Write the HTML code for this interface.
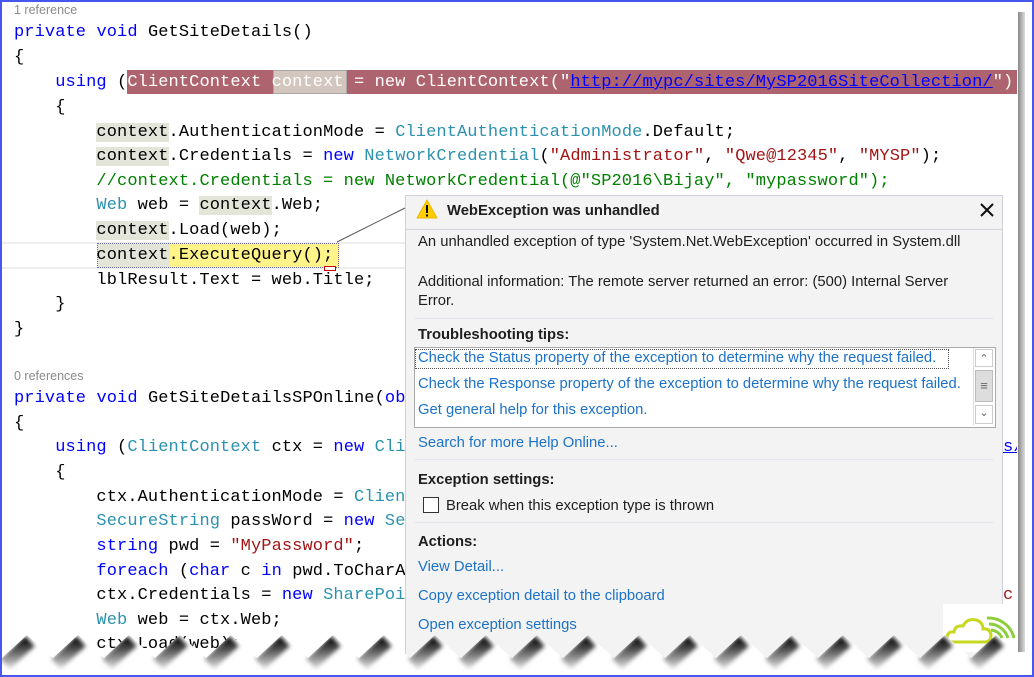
<!DOCTYPE html>
<html><head><meta charset="utf-8"><style>
html,body{margin:0;padding:0;}
body{width:1034px;height:677px;position:relative;overflow:hidden;background:#fff;font-family:"Liberation Sans",sans-serif;}
#frame{position:absolute;left:0;top:0;width:1030px;height:673px;border:2px solid #4657ee;}
#code{position:absolute;left:2px;top:2px;width:1015px;height:671px;overflow:hidden;}
.l{position:absolute;left:12px;white-space:pre;font-family:"Liberation Mono",monospace;font-size:17px;letter-spacing:0.1px;line-height:24px;height:24px;color:#000;}
.ref{position:absolute;left:12px;font-size:12.5px;color:#8a8a8a;}
.k{color:#0000ff}.t{color:#2b91af}.s{color:#a31515}.c{color:#008000}
.u{color:#0000ff;text-decoration:underline}
.hl{background:#e3e5d8}
#popup{position:absolute;left:405px;top:195px;width:596px;height:470px;background:#f3f3f3;border:1px solid #cfd0dc;font-size:14.8px;color:#1e1e1e;}
.p{position:absolute;left:12px;white-space:nowrap;margin-top:2px;}
.b{font-weight:bold;}
.a{color:#1c72c8;}
.sep{position:absolute;left:8px;right:8px;height:1px;background:#e6e6ee;}
</style></head><body>
<div id="code">
<div class="ref" style="top:1px">1 reference</div>
<div class="l" style="top:19px"><span class="k">private</span> <span class="k">void</span> GetSiteDetails()</div>
<div class="l" style="top:44px">{</div>
<div style="position:absolute;left:125px;top:68px;width:895px;height:24px;background:#ad646e"></div>
<div style="position:absolute;left:271px;top:68px;width:72px;height:22px;background:#d3c6be;border:1px solid #a8a8a8"></div>
<div class="l" style="top:69px">    <span class="k">using</span> (<span style="color:#fff">ClientContext context = new ClientContext("<span style="color:#0000ff;text-decoration:underline">http://mypc/sites/MySP2016SiteCollection/</span>")</span></div>
<div class="l" style="top:94px">    {</div>
<div class="l" style="top:119px">        <span class="hl">context</span>.AuthenticationMode = <span class="t">ClientAuthenticationMode</span>.Default;</div>
<div class="l" style="top:143px">        <span class="hl">context</span>.Credentials = <span class="k">new</span> <span class="t">NetworkCredential</span>(<span class="s">"Administrator"</span>, <span class="s">"Qwe@12345"</span>, <span class="s">"MYSP"</span>);</div>
<div class="l" style="top:168px">        <span class="c">//context.Credentials = new NetworkCredential(@"SP2016\Bijay", "mypassword");</span></div>
<div class="l" style="top:192px">        <span class="t">Web</span> web = <span class="hl">context</span>.Web;</div>
<div class="l" style="top:217px">        <span class="hl">context</span>.Load(web);</div>
<div style="position:absolute;left:0;top:240px;width:405px;height:27px;border-top:2px solid #eee;border-bottom:2px solid #eee;box-sizing:border-box"></div>
<div style="position:absolute;left:95px;top:241px;width:242px;height:25px;border:1px dotted #6a6ab0;box-sizing:border-box;background:#fff38a"></div>
<div style="position:absolute;left:96px;top:242px;width:72px;height:23px;background:#e3e5d8"></div>
<div style="position:absolute;left:322px;top:264px;width:10px;height:3px;border:1px solid #c00;background:#fff"></div>
<div class="l" style="top:242px">        context.ExecuteQuery();</div>
<div class="l" style="top:267px">        lblResult.Text = web.Title;</div>
<div class="l" style="top:291px">    }</div>
<div class="l" style="top:316px">}</div>
<div class="ref" style="top:367px">0 references</div>
<div class="l" style="top:385px"><span class="k">private</span> <span class="k">void</span> GetSiteDetailsSPOnline(<span class="k">object</span> sender, <span class="t">EventArgs</span> e)</div>
<div class="l" style="top:410px">{</div>
<div class="l" style="top:434px">    <span class="k">using</span> (<span class="t">ClientContext</span> ctx = <span class="k">new</span> <span class="t">ClientContext</span>(<span class="s">"</span><span class="u">https://onlysharepoint2013.sharepoint.com/sites/Bhawana/somesiteses</span><span class="s">"</span>))</div>
<div class="l" style="top:459px">    {</div>
<div class="l" style="top:484px">        ctx.AuthenticationMode = <span class="t">ClientAuthenticationMode</span>.Default;</div>
<div class="l" style="top:508px">        <span class="t">SecureString</span> passWord = <span class="k">new</span> <span class="t">SecureString</span>();</div>
<div class="l" style="top:533px">        <span class="k">string</span> pwd = <span class="s">"MyPassword"</span>;</div>
<div class="l" style="top:558px">        <span class="k">foreach</span> (<span class="k">char</span> c <span class="k">in</span> pwd.ToCharArray()) passWord.AppendChar(c);</div>
<div class="l" style="top:582px">        ctx.Credentials = <span class="k">new</span> <span class="t">SharePointOnlineCredentials</span>(<span class="s">"bijay@onlysharepoint2013.onmicrosoft.c</span></div>
<div class="l" style="top:607px">        <span class="t">Web</span> web = ctx.Web;</div>
<div class="l" style="top:631px">        ctx.Load(web);</div>
</div>
<svg style="position:absolute;left:0;top:0" width="1034" height="677">
<line x1="337" y1="242" x2="405" y2="208" stroke="#555" stroke-width="1"/>
</svg>
<div id="popup">
<svg style="position:absolute;left:10px;top:3px" width="22" height="20" viewBox="0 0 22 20"><path d="M11 1 L21 19 L1 19 Z" fill="#ffcc00" stroke="#e8b800" stroke-linejoin="round"/><rect x="10" y="6" width="2" height="8" fill="#000"/><rect x="10" y="15.5" width="2" height="2" fill="#000"/></svg>
<div class="p b" style="left:41px;top:5px">WebException was unhandled</div>
<svg style="position:absolute;left:573px;top:6px" width="16" height="16"><path d="M2 2L14 14M14 2L2 14" stroke="#111" stroke-width="2"/></svg>
<div class="sep" style="top:33px;left:0;right:0;background:#d4d4e0"></div>
<div class="p" style="top:36px">An unhandled exception of type 'System.Net.WebException' occurred in System.dll</div>
<div class="p" style="top:76px">Additional information: The remote server returned an error: (500) Internal Server</div>
<div class="p" style="top:95px">Error.</div>
<div class="sep" style="top:122px"></div>
<div class="p b" style="top:129px">Troubleshooting tips:</div>
<div style="position:absolute;left:8px;top:151px;width:580px;height:79px;background:#fff;border:1px solid #aaa"></div>
<div style="position:absolute;left:9px;top:153px;width:532px;height:18px;border:1px dotted #555"></div>
<div style="position:absolute;left:567px;top:152px;width:20px;height:77px;border-left:1px solid #ddd">
<div style="position:absolute;left:1px;top:1px;width:18px;height:18px;border:1px solid #ccc;box-sizing:border-box;font-size:11px;text-align:center;line-height:18px;color:#666">&#8963;</div>
<div style="position:absolute;left:1px;top:22px;width:18px;height:32px;background:#ddd;border:1px solid #bbb;box-sizing:border-box;text-align:center;line-height:30px;font-size:13px;color:#666">&#8801;</div>
<div style="position:absolute;left:1px;top:57px;width:18px;height:19px;border:1px solid #ccc;box-sizing:border-box;font-size:11px;text-align:center;line-height:14px;color:#666">&#8964;</div>
</div>
<div class="p a" style="top:152px">Check the Status property of the exception to determine why the request failed.</div>
<div class="p a" style="top:178px">Check the Response property of the exception to determine why the request failed.</div>
<div class="p a" style="top:204px">Get general help for this exception.</div>
<div class="p a" style="top:237px">Search for more Help Online...</div>
<div class="sep" style="top:263px"></div>
<div class="p b" style="top:274px">Exception settings:</div>
<div style="position:absolute;left:17px;top:301px;width:14px;height:14px;border:1px solid #333;background:#fff"></div>
<div class="p" style="left:40px;top:300px">Break when this exception type is thrown</div>
<div class="sep" style="top:326px"></div>
<div class="p b" style="top:336px">Actions:</div>
<div class="p a" style="top:361px">View Detail...</div>
<div class="p a" style="top:390px">Copy exception detail to the clipboard</div>
<div class="p a" style="top:419px">Open exception settings</div>
</div>
<!-- right shadow -->
<div style="position:absolute;left:1018px;top:12px;width:7px;height:640px;background:linear-gradient(to right,#888,#ddd)"></div>
<div style="position:absolute;left:1025px;top:2px;width:7px;height:673px;background:#fff"></div>
<!-- logo -->
<div style="position:absolute;left:943px;top:604px;width:75px;height:48px;background:#fff"></div>
<svg style="position:absolute;left:943px;top:604px" width="75" height="48" viewBox="0 0 75 48">
<path d="M44 14 A26 26 0 0 1 71 34" fill="none" stroke="#8ccf3a" stroke-width="3"/>
<path d="M46 20 A20 20 0 0 1 65 34" fill="none" stroke="#8ccf3a" stroke-width="3"/>
<path d="M48 26 A13 13 0 0 1 59 34" fill="none" stroke="#8ccf3a" stroke-width="3"/>
<path d="M9 38 Q4 38 4 33 Q5 27 11 28 Q12 21 20 22 Q24 14 33 16 Q40 18 40 25 Q47 24 48 31 Q48 38 42 38 Z" fill="#fff" stroke="#c8d820" stroke-width="3"/>
</svg>
<!-- torn edge -->
<svg style="position:absolute;left:0;top:620px" width="1034" height="57" viewBox="0 0 1034 57">
<defs>
<path id="saw" d="M0 38 L2 38 L27 15 L53 38 L78 15 L104 38 L129 15 L155 38 L180 15 L206 38 L231 15 L257 38 L282 15 L308 38 L333 15 L359 38 L384 15 L410 38 L435 15 L461 38 L486 15 L512 38 L537 15 L563 38 L588 15 L614 38 L639 15 L665 38 L690 15 L716 38 L741 15 L767 38 L792 15 L818 38 L843 15 L869 38 L894 15 L920 38 L945 15 L971 38 L996 15 L1022 38 L1034 38 L1034 57 L0 57 Z"/>
<clipPath id="cp"><use href="#saw"/></clipPath>
<filter id="bl" x="-20%" y="-50%" width="140%" height="200%"><feGaussianBlur stdDeviation="2"/></filter>
<linearGradient id="sg" gradientUnits="userSpaceOnUse" x1="0" y1="15" x2="0" y2="42"><stop offset="0" stop-color="#111"/><stop offset="1" stop-color="#ddd"/></linearGradient>
</defs>
<use href="#saw" fill="#fff"/>
<g clip-path="url(#cp)">
<path filter="url(#bl)" transform="translate(3,6)" stroke="url(#sg)" stroke-width="14" fill="none" d="M2 38 L27 15 M53 38 L78 15 M104 38 L129 15 M155 38 L180 15 M206 38 L231 15 M257 38 L282 15 M308 38 L333 15 M359 38 L384 15 M410 38 L435 15 M461 38 L486 15 M512 38 L537 15 M563 38 L588 15 M614 38 L639 15 M665 38 L690 15 M716 38 L741 15 M767 38 L792 15 M818 38 L843 15 M869 38 L894 15 M920 38 L945 15 M971 38 L996 15"/>
</g>
</svg>
<div id="frame"></div>
</body></html>
